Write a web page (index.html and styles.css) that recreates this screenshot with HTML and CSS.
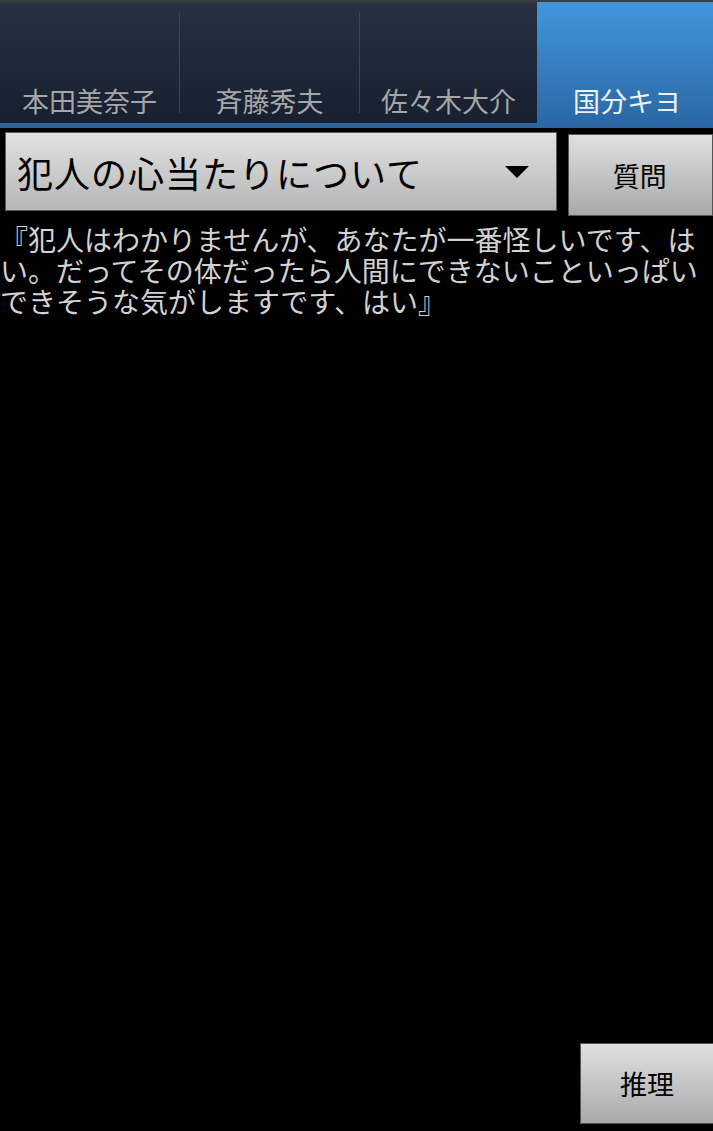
FILE: index.html
```html
<!DOCTYPE html>
<html lang="ja">
<head>
<meta charset="utf-8">
<title>推理</title>
<link rel="stylesheet" href="styles.css">
</head>
<body>
<div class="screen">
  <div class="topline"></div>
  <div class="tabs">
    <div class="tab">本田美奈子</div>
    <div class="divider"></div>
    <div class="tab">斉藤秀夫</div>
    <div class="divider"></div>
    <div class="tab">佐々木大介</div>
    <div class="tab active">国分キヨ</div>
  </div>
  <div class="indicator"></div>
  <div class="question-row">
    <div class="spinner">
      <span class="spinner-text">犯人の心当たりについて</span>
      <span class="arrow"></span>
    </div>
    <div class="btn ask">質問</div>
  </div>
  <p class="answer">『犯人はわかりませんが、あなたが一番怪しいです、はい。だってその体だったら人間にできないこといっぱいできそうな気がしますです、はい』</p>
  <div class="footer">
    <div class="btn deduce">推理</div>
  </div>
</div>
</body>
</html>
```

FILE: styles.css
```css
html, body {
  margin: 0;
  padding: 0;
  background: #000;
}
body {
  font-family: "Noto Sans CJK JP", "Noto Sans", sans-serif;
}
.screen {
  width: 713px;
  height: 1131px;
  display: flex;
  flex-direction: column;
  overflow: hidden;
}
.topline {
  height: 2px;
  background: #3a3d42;
}
.tabs {
  height: 121px;
  display: flex;
  align-items: stretch;
  background: linear-gradient(#283143, #172030);
}
.tab {
  flex: 0 0 179px;
  display: flex;
  align-items: flex-end;
  justify-content: center;
  padding-bottom: 6px;
  box-sizing: border-box;
  font-size: 27px;
  line-height: 32px;
  color: #a6a6a6;
  white-space: nowrap;
}
.tab:nth-child(5) { flex-basis: 177px; }
.divider {
  width: 1px;
  margin: 10px 0 10px;
  background: #3b4454;
}
.tab.active {
  flex: 1 1 auto;
  padding-left: 4px;
  color: #eef2f7;
  background: linear-gradient(#4396dc, #2a68a6);
}
.indicator {
  height: 5px;
  background: #2b66a1;
}
.question-row {
  display: flex;
  align-items: flex-start;
  padding: 4px 0 0 5px;
  gap: 11px;
}
.spinner {
  width: 554px;
  height: 79px;
  box-sizing: border-box;
  border: 1px solid #5a5a5a;
  background: linear-gradient(#e2e2e2, #b6b6b6);
  display: flex;
  align-items: center;
  justify-content: space-between;
  padding: 0 27px 0 11px;
}
.spinner-text {
  font-size: 36px;
  line-height: 40px;
  color: #000;
  letter-spacing: 1px;
}
.arrow {
  width: 0;
  height: 0;
  border-left: 12.5px solid transparent;
  border-right: 12.5px solid transparent;
  border-top: 12px solid #000;
}
.btn {
  box-sizing: border-box;
  border: 1px solid #555;
  background: linear-gradient(#e0e0e0, #a9a9a9);
  color: #000;
  font-size: 27px;
  display: flex;
  align-items: center;
  justify-content: center;
}
.ask {
  margin-top: 2px;
  width: 145px;
  height: 82px;
  padding-right: 2px;
}
.answer {
  width: 706px;
  margin: 8px 0 0;
  font-size: 28px;
  line-height: 31px;
  color: #d2d2d2;
}
.footer {
  flex: 1;
  display: flex;
  justify-content: flex-end;
  align-items: flex-end;
  padding-bottom: 7px;
}
.deduce {
  width: 133px;
  height: 81px;
  border-right: none;
}
```
